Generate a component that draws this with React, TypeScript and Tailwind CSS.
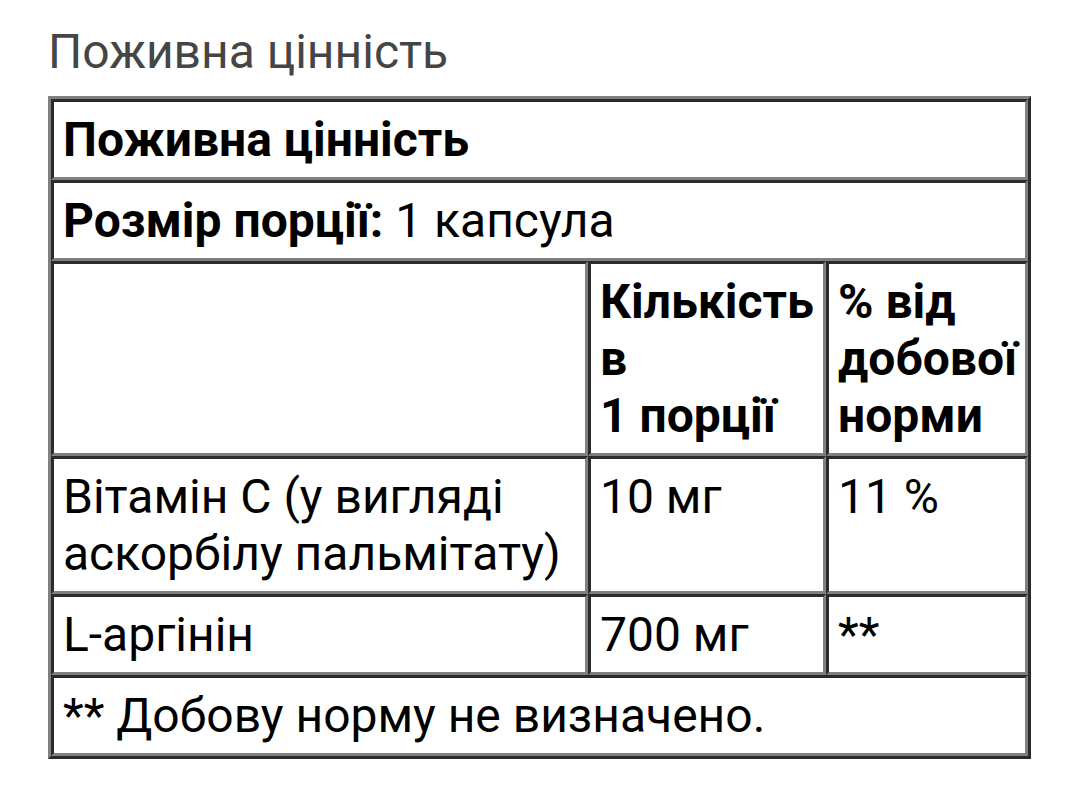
import React from "react";

const cell =
  "border-[3px] border-solid border-t-[#2b2b2b] border-l-[#2b2b2b] border-r-[#808080] border-b-[#808080] p-[9px] align-top text-left";

export default function App() {
  return (
    <div className="min-h-screen bg-white pl-[48px] pt-[23px] font-['Roboto',sans-serif] text-[48px] leading-[57px] text-black">
      <h1 className="font-normal text-[#454545]">Поживна цінність</h1>
      <table className="mt-[16px] w-[983px] table-fixed border-separate border-spacing-0 border-[3px] border-solid border-t-[#808080] border-l-[#808080] border-r-[#2b2b2b] border-b-[#2b2b2b]">
        <colgroup>
          <col className="w-[537px]" />
          <col className="w-[238px]" />
          <col className="w-[202px]" />
        </colgroup>
        <tbody>
          <tr>
            <th colSpan={3} className={cell + " font-bold"}>
              Поживна цінність
            </th>
          </tr>
          <tr>
            <td colSpan={3} className={cell}>
              <b>Розмір порції:</b> 1 капсула
            </td>
          </tr>
          <tr>
            <td className={cell}></td>
            <th className={cell + " font-bold"}>
              Кількість
              <br />в<br />1 порції
            </th>
            <th className={cell + " font-bold"}>% від добової норми</th>
          </tr>
          <tr>
            <td className={cell}>Вітамін С (у вигляді аскорбілу пальмітату)</td>
            <td className={cell}>10 мг</td>
            <td className={cell}>11 %</td>
          </tr>
          <tr>
            <td className={cell}>L-аргінін</td>
            <td className={cell}>700 мг</td>
            <td className={cell}>**</td>
          </tr>
          <tr>
            <td colSpan={3} className={cell}>
              ** Добову норму не визначено.
            </td>
          </tr>
        </tbody>
      </table>
    </div>
  );
}
